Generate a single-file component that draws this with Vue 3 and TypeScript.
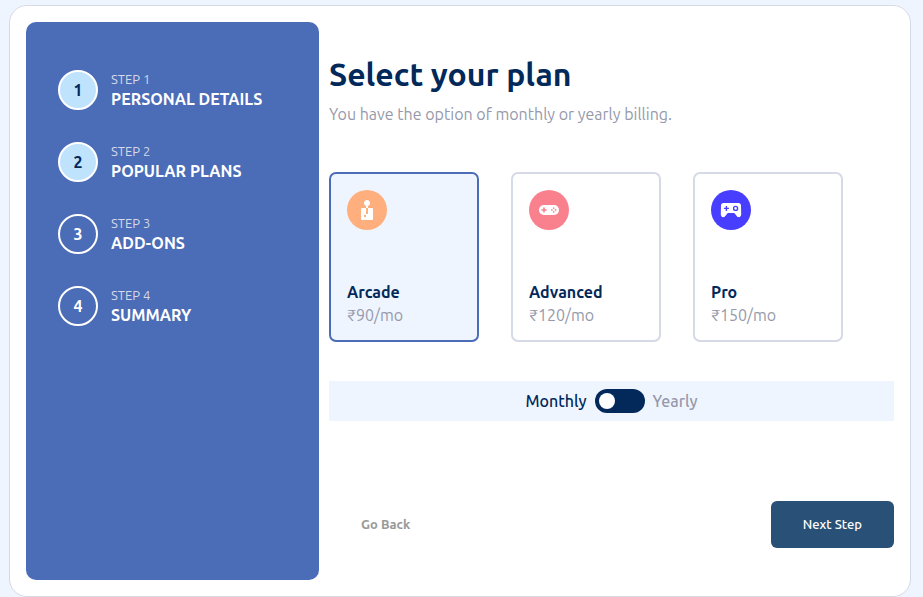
<script setup lang="ts">
import { computed, ref } from 'vue'

type PlanId = 'arcade' | 'advanced' | 'pro'

interface Plan {
  id: PlanId
  name: string
  monthly: number
}

const steps: string[] = ['Personal details', 'Popular plans', 'Add-ons', 'Summary']
const currentStep = ref(2)

const plans: Plan[] = [
  { id: 'arcade', name: 'Arcade', monthly: 90 },
  { id: 'advanced', name: 'Advanced', monthly: 120 },
  { id: 'pro', name: 'Pro', monthly: 150 },
]
const selected = ref<PlanId>('arcade')
const yearly = ref(false)

const priced = computed(() =>
  plans.map((plan) => ({
    ...plan,
    price: yearly.value ? `₹${plan.monthly * 10}/yr` : `₹${plan.monthly}/mo`,
  })),
)

function move(delta: number): void {
  currentStep.value = Math.min(steps.length, Math.max(1, currentStep.value + delta))
}
</script>

<template>
  <div class="card">
    <aside class="sidebar">
      <ol class="steps">
        <li v-for="(title, i) in steps" :key="title" class="step">
          <span class="badge" :class="{ reached: i < currentStep }">{{ i + 1 }}</span>
          <div class="step-text">
            <span class="step-label">Step {{ i + 1 }}</span>
            <span class="step-title">{{ title }}</span>
          </div>
        </li>
      </ol>
    </aside>

    <main class="content">
      <h1>Select your plan</h1>
      <p class="lead">You have the option of monthly or yearly billing.</p>

      <div class="plans" role="radiogroup">
        <label
          v-for="plan in priced"
          :key="plan.id"
          class="plan"
          :class="{ active: selected === plan.id }"
        >
          <input v-model="selected" class="hidden-input" type="radio" name="plan" :value="plan.id" />
          <svg class="plan-icon" viewBox="0 0 40 40">
            <template v-if="plan.id === 'arcade'">
              <circle cx="20" cy="20" r="20" fill="#ffaf7e" />
              <path
                fill="#fff"
                d="M24.995 18.005h-3.998v5.998h-2v-5.998H15a1 1 0 0 0-1 1V29a1 1 0 0 0 1 1h9.995a1 1 0 0 0 1-1v-9.995a1 1 0 0 0-1-1Zm-5.997 8.996h-2v-1.999h2v2Zm2-11.175a2.999 2.999 0 1 0-2 0v2.18h2v-2.18Z"
              />
            </template>
            <template v-else-if="plan.id === 'advanced'">
              <circle cx="20" cy="20" r="20" fill="#f9818e" />
              <rect x="10" y="15" width="20" height="9.9" rx="4.95" fill="#fff" />
              <path
                fill="#f9818e"
                d="M14.2 17.4h1.6v1.8h1.8v1.5h-1.8v1.8h-1.6v-1.8h-1.8v-1.5h1.8Z"
              />
              <g fill="#f9818e">
                <circle cx="24.75" cy="18.06" r=".87" />
                <circle cx="24.75" cy="21.8" r=".87" />
                <circle cx="22.85" cy="19.93" r=".87" />
                <circle cx="26.65" cy="19.93" r=".87" />
              </g>
            </template>
            <template v-else>
              <circle cx="20" cy="20" r="20" fill="#483eff" />
              <path
                fill="#fff"
                d="M12.6 13h14.8c1.6 0 2.6 1 2.6 2.6l.2 8.4c.1 2-1 3.2-2.3 3.2-1 0-1.6-.4-2.2-1.2l-1.6-2c-.5-.7-1-.9-1.8-.9h-4.6c-.8 0-1.3.2-1.8.9l-1.600 2c-.6.8-1.2 1.2-2.2 1.2-1.3 0-2.400-1.200-2.300-3.200l.2-8.400c0-1.600 1-2.600 2.600-2.600Z"
              />
              <path d="M15.400 15.900v5M12.900 18.400h5" fill="none" stroke="#483eff" stroke-width="1.4" />
              <circle cx="24.600" cy="18.400" r="2" fill="none" stroke="#483eff" stroke-width="1.4" />
            </template>
          </svg>
          <span class="plan-name">{{ plan.name }}</span>
          <span class="plan-price">{{ plan.price }}</span>
        </label>
      </div>

      <label class="billing">
        <span class="period" :class="{ on: !yearly }">Monthly</span>
        <input v-model="yearly" class="switch" type="checkbox" role="switch" />
        <span class="period" :class="{ on: yearly }">Yearly</span>
      </label>

      <div class="actions">
        <button type="button" class="btn back" @click="move(-1)">Go Back</button>
        <button type="button" class="btn next" @click="move(1)">Next Step</button>
      </div>
    </main>
  </div>
</template>

<style>
body {
  background: #eff5ff;
}
</style>

<style scoped>
.card,
.card * {
  box-sizing: border-box;
}

.card {
  display: grid;
  grid-template-columns: minmax(0, 293fr) minmax(0, 565fr);
  gap: 10px;
  margin: 5px 12px 0 9px;
  padding: 16px;
  border: 1px solid #d6d9e6;
  border-radius: 18px;
  background: #fff;
  color: #02295a;
  font-family: Ubuntu, 'Noto Sans', sans-serif;
  font-size: 16px;
}

.sidebar {
  padding: 48px 32px;
  border-radius: 10px;
  background: #4b6cb7;
}

.steps {
  display: grid;
  gap: 32px;
  margin: 0;
  padding: 0;
  list-style: none;
}

.step {
  display: flex;
  align-items: center;
  gap: 13px;
  color: #fff;
  text-transform: uppercase;
}

.badge {
  display: grid;
  flex: none;
  place-items: center;
  width: 40px;
  height: 40px;
  border: 2px solid #fff;
  border-radius: 50%;
  font-weight: 700;
}

.badge.reached {
  background: #bfe2fd;
  color: #02295a;
}

.step-text {
  display: grid;
}

.step-label {
  color: #d6d9e6;
  font-size: 13px;
  line-height: 18px;
}

.step-title {
  font-weight: 700;
  line-height: 22px;
  white-space: nowrap;
}

.content {
  display: flex;
  flex-direction: column;
  padding: 32px 0;
}

h1 {
  margin: 0;
  font-size: 32px;
  font-weight: 700;
  line-height: 40px;
}

.lead {
  margin: 8px 0 0;
  color: #9699ab;
  line-height: 24px;
}

.plans {
  display: flex;
  flex-wrap: wrap;
  gap: 32px;
  margin-top: 46px;
}

.plan {
  display: flex;
  flex-direction: column;
  width: 150px;
  min-height: 170px;
  padding: 16px 16px 13px;
  border: 2px solid #d6d9e6;
  border-radius: 7px;
  cursor: pointer;
}

.plan.active {
  border-color: #4b6cb7;
  background: #eff5ff;
}

.hidden-input {
  position: absolute;
  opacity: 0;
  pointer-events: none;
}

.plan-icon {
  width: 40px;
  height: 40px;
  margin-bottom: auto;
}

.plan-name {
  font-weight: 700;
  line-height: 23px;
}

.plan-price {
  color: #9699ab;
  line-height: 23px;
}

.billing {
  display: flex;
  align-items: center;
  justify-content: center;
  gap: 8px;
  min-height: 40px;
  margin-top: 39px;
  background: #eff5ff;
  cursor: pointer;
}

.period {
  color: #9699ab;
  font-weight: 500;
}

.period.on {
  color: #02295a;
}

.switch {
  display: flex;
  align-items: center;
  width: 50px;
  height: 24px;
  margin: 0;
  padding: 4px;
  border-radius: 12px;
  background: #02295a;
  appearance: none;
  cursor: pointer;
}

.switch::before {
  width: 16px;
  height: 16px;
  border-radius: 50%;
  background: #fff;
  content: '';
}

.switch:checked {
  justify-content: flex-end;
}

.actions {
  display: flex;
  justify-content: space-between;
  margin-top: 80px;
}

.btn {
  padding: 14px 32px;
  border: 0;
  border-radius: 6px;
  font-family: inherit;
  font-size: 13px;
  line-height: 19px;
  cursor: pointer;
}

.back {
  background: transparent;
  color: #999;
  font-weight: 700;
}

.next {
  background: #295177;
  color: #fff;
  font-weight: 500;
}
</style>
